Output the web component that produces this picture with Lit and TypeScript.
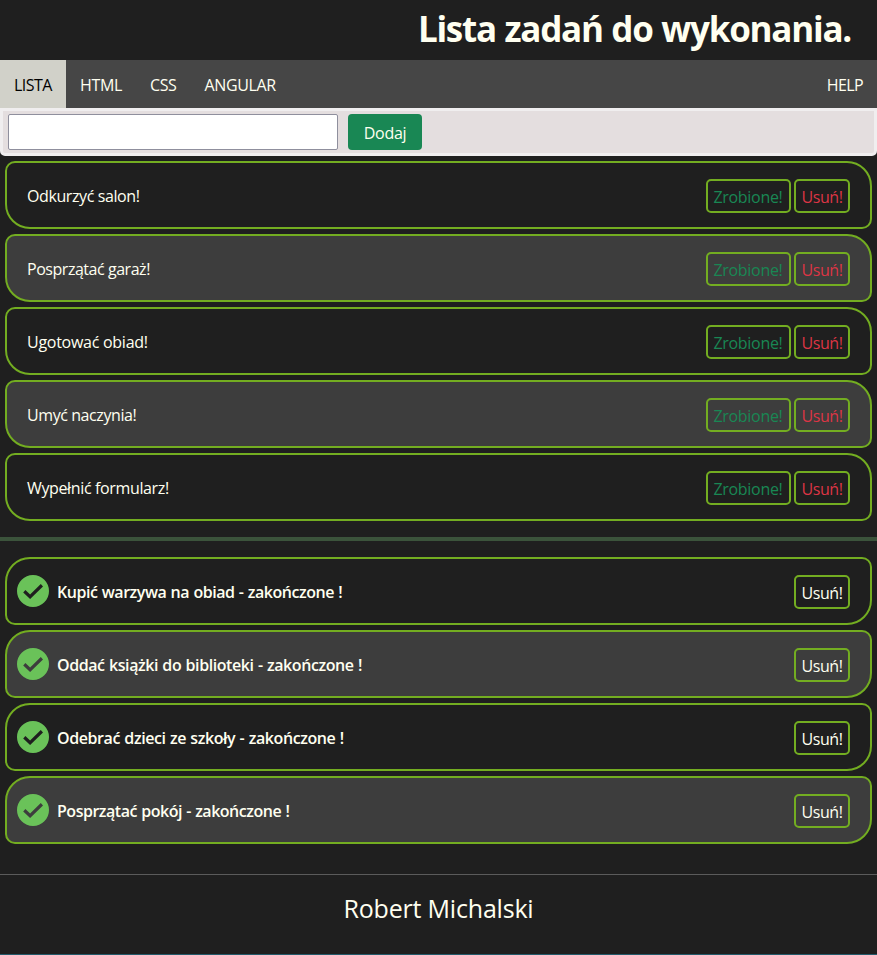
import { LitElement, html, css } from "lit";
import { customElement } from "lit/decorators.js";

interface Task {
  name: string;
  spacing: number;
}

const openTasks: Task[] = [
  { name: "Odkurzyć salon!", spacing: -0.4 },
  { name: "Posprzątać garaż!", spacing: -0.46 },
  { name: "Ugotować obiad!", spacing: -0.27 },
  { name: "Umyć naczynia!", spacing: -0.42 },
  { name: "Wypełnić formularz!", spacing: -0.36 },
];

const doneTasks: Task[] = [
  { name: "Kupić warzywa na obiad", spacing: -0.46 },
  { name: "Oddać książki do biblioteki", spacing: -0.42 },
  { name: "Odebrać dzieci ze szkoły", spacing: -0.41 },
  { name: "Posprzątać pokój", spacing: -0.48 },
];

@customElement("app-root")
export class AppRoot extends LitElement {
  static styles = css`
    :host {
      display: flex;
      flex-direction: column;
      box-sizing: border-box;
      height: 955px;
      background: #1f1f1f;
      border-bottom: 1px solid #235a6b;
      color: ivory;
      font: 16px/24px "Open Sans", "Noto Sans", sans-serif;
      overflow: hidden;
    }
    * {
      box-sizing: border-box;
    }
    h1 {
      margin: 0;
      height: 60px;
      padding: 6px 26px 0 0;
      text-align: right;
      font-size: 35px;
      line-height: 46px;
      font-weight: 700;
      letter-spacing: -1.25px;
      word-spacing: 0.8px;
      white-space: nowrap;
    }
    nav {
      display: flex;
      height: 48px;
      background: #464646;
    }
    nav a {
      padding: 13px 14px 0;
      line-height: 24px;
      letter-spacing: -0.35px;
      white-space: nowrap;
    }
    nav .active {
      width: 66px;
      letter-spacing: -0.55px;
      background: #d1d1c9;
      color: #000;
    }
    nav .help {
      margin-left: auto;
      letter-spacing: -0.6px;
    }
    form {
      display: flex;
      gap: 10px;
      height: 48px;
      padding: 3px 5px;
      border: 3px solid #f0eeef;
      border-radius: 0 0 5px 5px;
      background: #e4dedf;
    }
    input {
      width: 330px;
      height: 36px;
      border: 1px solid #8f8f9d;
      border-radius: 2px;
      background: #fff;
      outline: none;
    }
    .add {
      width: 74px;
      height: 36px;
      padding: 2px 0 0;
      border: 0;
      border-radius: 4px;
      background: #198754;
      color: ivory;
      font: inherit;
      letter-spacing: -0.3px;
    }
    ul {
      list-style: none;
      margin: 0;
      padding: 5px;
      display: flex;
      flex-direction: column;
      gap: 5px;
    }
    li {
      display: flex;
      align-items: center;
      gap: 3px;
      height: 68px;
      padding: 0 20px;
      border: 2px solid #73ad21;
      border-radius: 10px 25px;
    }
    li:nth-child(even) {
      background: #3d3d3d;
    }
    .label {
      margin-right: auto;
      padding-top: 2px;
      white-space: nowrap;
    }
    li button {
      height: 34px;
      width: 56px;
      margin-top: 2px;
      padding: 2px 0 0;
      border: 2px solid #73ad21;
      border-radius: 5px;
      background: none;
      color: ivory;
      font: inherit;
      line-height: 24px;
      letter-spacing: -0.45px;
      white-space: nowrap;
    }
    li .finish {
      width: 85px;
      padding-right: 1px;
      letter-spacing: -0.3px;
      color: #198754;
    }
    .open .remove {
      color: #dc3545;
    }
    .done li {
      border-radius: 25px 10px;
      padding-left: 10px;
    }
    .done .label {
      padding-left: 5px;
      font-weight: 600;
      word-spacing: 0.6px;
    }
    .check {
      width: 32px;
      height: 32px;
      flex: none;
    }
    .divider {
      height: 4px;
      margin: 11px 0;
      background: #3b533b;
    }
    footer {
      margin-top: 25px;
      padding-top: 14px;
      border-top: 1px solid #5b5b5b;
      text-align: center;
      font-size: 25px;
      line-height: 38px;
      letter-spacing: -0.2px;
    }
  `;

  private label(text: string, spacing: number) {
    return html`<span class="label" style="letter-spacing:${spacing}px">${text}</span>`;
  }

  render() {
    return html`
      <h1>Lista zadań do wykonania.</h1>
      <nav>
        <a class="active">LISTA</a>
        <a>HTML</a>
        <a>CSS</a>
        <a>ANGULAR</a>
        <a class="help">HELP</a>
      </nav>
      <form @submit=${(e: Event) => e.preventDefault()}>
        <input type="text" />
        <button class="add">Dodaj</button>
      </form>
      <ul class="open">
        ${openTasks.map(
          (t) => html`<li>
            ${this.label(t.name, t.spacing)}
            <button class="finish">Zrobione!</button>
            <button class="remove">Usuń!</button>
          </li>`
        )}
      </ul>
      <div class="divider"></div>
      <ul class="done">
        ${doneTasks.map(
          (t) => html`<li>
            <svg class="check" viewBox="0 0 32 32">
              <path
                fill="#6ac259"
                fill-rule="evenodd"
                d="M16 0a16 16 0 1 0 0 32a16 16 0 1 0 0-32zM13.1 24L6.2 17.4L8.4 15L13.1 19.5L23.8 9L26 11.4z"
              />
            </svg>
            ${this.label(`${t.name} - zakończone !`, t.spacing)}
            <button class="remove">Usuń!</button>
          </li>`
        )}
      </ul>
      <footer>Robert Michalski</footer>
    `;
  }
}
